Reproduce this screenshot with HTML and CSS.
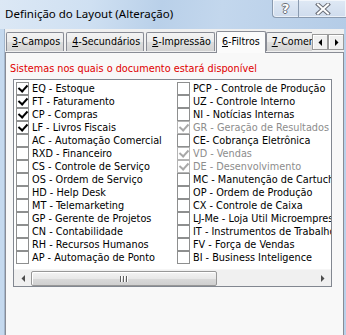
FILE: index.html
```html
<!DOCTYPE html>
<html>
<head>
<meta charset="utf-8">
<link rel="stylesheet" href="styles.css">
</head>
<body>
<div class="window">
  <div class="titlebar">
    <span class="title">Definição do Layout (Alteração)</span>
    <div class="capbtns">
      <div class="capbtn help"><span>?</span></div>
      <div class="capbtn close">
        <svg width="16" height="12" viewBox="0 0 16 12">
          <path d="M3 1.5 L13 10.5 M13 1.5 L3 10.5" stroke="#6b6f78" stroke-width="4" stroke-linecap="square" fill="none"/>
          <path d="M3 1.5 L13 10.5 M13 1.5 L3 10.5" stroke="#ffffff" stroke-width="2" stroke-linecap="square" fill="none"/>
        </svg>
      </div>
    </div>
  </div>
  <div class="client">
    <div class="tabrow">
      <div class="tab"><u>3</u>-Campos</div>
      <div class="tab"><u>4</u>-Secundários</div>
      <div class="tab"><u>5</u>-Impressão</div>
      <div class="tab sel"><u>6</u>-Filtros</div>
      <div class="tab last"><u>7</u>-Comentários</div>
      <div class="arrows">
        <div class="arr"><svg width="5" height="7" viewBox="0 0 5 7"><path d="M4 0 L4 7 L0.5 3.5 Z" fill="#000"/></svg></div>
        <div class="arr"><svg width="5" height="7" viewBox="0 0 5 7"><path d="M1 0 L1 7 L4.5 3.5 Z" fill="#000"/></svg></div>
      </div>
    </div>
    <div class="panel">
      <div class="label">Sistemas nos quais o documento estará disponível</div>
      <div class="listbox">
        <div class="cols">
          <div class="col">
            <div class="item"><span class="cb on"></span>EQ - Estoque</div>
            <div class="item"><span class="cb on"></span>FT - Faturamento</div>
            <div class="item"><span class="cb on"></span>CP - Compras</div>
            <div class="item"><span class="cb on"></span>LF - Livros Fiscais</div>
            <div class="item"><span class="cb"></span>AC - Automação Comercial</div>
            <div class="item"><span class="cb"></span>RXD - Financeiro</div>
            <div class="item"><span class="cb"></span>CS - Controle de Serviço</div>
            <div class="item"><span class="cb"></span>OS - Ordem de Serviço</div>
            <div class="item"><span class="cb"></span>HD - Help Desk</div>
            <div class="item"><span class="cb"></span>MT - Telemarketing</div>
            <div class="item"><span class="cb"></span>GP - Gerente de Projetos</div>
            <div class="item"><span class="cb"></span>CN - Contabilidade</div>
            <div class="item"><span class="cb"></span>RH - Recursos Humanos</div>
            <div class="item"><span class="cb"></span>AP - Automação de Ponto</div>
          </div>
          <div class="col">
            <div class="item"><span class="cb"></span>PCP - Controle de Produção</div>
            <div class="item"><span class="cb"></span>UZ - Controle Interno</div>
            <div class="item"><span class="cb"></span>NI - Notícias Internas</div>
            <div class="item dis"><span class="cb on"></span>GR - Geração de Resultados</div>
            <div class="item"><span class="cb"></span>CE- Cobrança Eletrônica</div>
            <div class="item dis"><span class="cb on"></span>VD - Vendas</div>
            <div class="item dis"><span class="cb on"></span>DE - Desenvolvimento</div>
            <div class="item"><span class="cb"></span>MC - Manutenção de Cartuchos</div>
            <div class="item"><span class="cb"></span>OP - Ordem de Produção</div>
            <div class="item"><span class="cb"></span>CX - Controle de Caixa</div>
            <div class="item"><span class="cb"></span>LJ-Me - Loja Util Microempresa</div>
            <div class="item"><span class="cb"></span>IT - Instrumentos de Trabalho</div>
            <div class="item"><span class="cb"></span>FV - Força de Vendas</div>
            <div class="item"><span class="cb"></span>BI - Business Inteligence</div>
          </div>
        </div>
        <div class="hscroll">
          <div class="sbtn"><svg width="4" height="7" viewBox="0 0 4 7"><path d="M4 0 L4 7 L0.5 3.5 Z" fill="#4d4d4d"/></svg></div>
          <div class="track">
            <div class="thumb"><span class="grip"></span><span class="grip"></span><span class="grip"></span></div>
          </div>
          <div class="sbtn"><svg width="4" height="7" viewBox="0 0 4 7"><path d="M0 0 L0 7 L3.5 3.5 Z" fill="#4d4d4d"/></svg></div>
        </div>
      </div>
    </div>
  </div>
</div>
</body>
</html>
```

FILE: styles.css
```css
* { box-sizing: border-box; }
html, body { margin: 0; padding: 0; }
body {
  width: 346px;
  height: 335px;
  overflow: hidden;
  background: #f0f0f0;
  font-family: "DejaVu Sans Condensed", "DejaVu Sans", sans-serif;
  font-stretch: condensed;
}
.window {
  width: 346px;
  height: 335px;
  display: flex;
  flex-direction: column;
  background: linear-gradient(90deg, #c5d9ee 0px, #b9d1ea 100%);
}
.titlebar {
  height: 29px;
  flex: none;
  position: relative;
  background: linear-gradient(100deg, #dce8f5 0px, #cfe0f2 90px, #b9d0e9 160px, #c3d7ed 220px, #b4cce7 346px);
  display: flex;
  align-items: flex-start;
}
.title {
  font-family: "Noto Sans", "Open Sans", sans-serif;
  font-stretch: normal;
  font-size: 11.5px;
  color: #000;
  padding: 6px 0 0 5px;
}
.capbtns {
  position: absolute;
  top: 0;
  right: 0;
  display: flex;
  height: 18px;
  border: 1px solid #8a9bb0;
  border-top: none;
  border-right: none;
  border-radius: 0 0 0 4px;
  background: linear-gradient(#dfe9f5, #cfdced);
  box-shadow: inset 0 0 0 1px rgba(255,255,255,0.6);
}
.capbtn {
  display: flex;
  align-items: center;
  justify-content: center;
}
.capbtn.help {
  width: 26px;
  border-right: 1px solid #8a9bb0;
  font-family: "DejaVu Sans", sans-serif;
  font-stretch: normal;
  font-weight: bold;
  font-size: 13px;
  color: #fff;
  text-shadow: -1px 0 #6b6f78, 1px 0 #6b6f78, 0 -1px #6b6f78, 0 1px #6b6f78;
}
.capbtn.close { width: 47px; }
.client {
  flex: 1;
  margin: 0 2px 0 4px;
  background: #f0f0f0;
  border-left: 1px solid #a3b6cc;
  padding: 1px 0 0 0;
  display: flex;
  flex-direction: column;
}
.tabrow {
  display: flex;
  align-items: flex-end;
  height: 22px;
  padding-left: 1px;
  position: relative;
  z-index: 1;
}
.tab {
  flex: none;
  height: 19px;
  border: 1px solid #898c95;
  border-bottom: none;
  border-radius: 2px 2px 0 0;
  background: linear-gradient(#f3f3f3, #ebebeb 50%, #dedede 51%, #d3d3d3);
  font-size: 10.6px;
  line-height: 17px;
  padding: 0 3px 0 5px;
  margin-right: 2px;
  margin-bottom: 1px;
  white-space: nowrap;
  color: #000;
}
.tab.sel {
  height: 22px;
  margin: 0 -1px -1px -1px;
  padding: 0 5px 0 5px;
  background: #fbfbfb;
  line-height: 19px;
}
.tab.last {
  flex: 1 1 auto;
  min-width: 0;
  overflow: hidden;
  border-right: none;
  border-radius: 2px 0 0 0;
  padding-left: 5px;
  margin: 0 0 1px 1px;
}
.arrows {
  flex: none;
  display: flex;
  margin-bottom: 2px;
}
.arr {
  width: 16px;
  height: 16px;
  border: 1px solid #9a9a9a;
  background: #f0f0f0;
  display: flex;
  align-items: center;
  justify-content: center;
  box-shadow: inset 1px 1px #ffffff;
}
.panel {
  flex: 1;
  border: 1px solid #898c95;
  border-bottom: none;
  background: #f8f8f8;
  padding: 9px 0 0 4px;
}
.label {
  color: #e00000;
  font-size: 10.8px;
  height: 14px;
  line-height: 14px;
  margin-bottom: 3px;
}
.listbox {
  margin-left: 3px;
  width: 319px;
  height: 208px;
  border: 1px solid #828790;
  background: #fff;
  display: flex;
  flex-direction: column;
  overflow: hidden;
}
.cols {
  flex: 1;
  display: flex;
  padding: 2px 0 0 0;
  overflow: hidden;
}
.col {
  width: 161px;
  flex: none;
  overflow: hidden;
}
.item {
  height: 13px;
  display: flex;
  align-items: center;
  white-space: nowrap;
  font-size: 10.8px;
  line-height: 13px;
  color: #000;
  padding-left: 2px;
}
.item.dis { color: #8d8d8d; }
.cb {
  width: 13px;
  height: 13px;
  flex: none;
  border: 1px solid #8e8f8f;
  background: #fff;
  margin-right: 3px;
  position: relative;
}
.cb.on::after {
  content: "";
  position: absolute;
  left: 3px;
  top: 0px;
  width: 4px;
  height: 7px;
  border: solid #000;
  border-width: 0 2.5px 2.5px 0;
  transform: rotate(42deg);
}
.item.dis .cb { border-color: #b4b4b4; }
.item.dis .cb.on::after { border-color: #a8a8a8; }
.hscroll {
  height: 17px;
  flex: none;
  display: flex;
  background: #f0f0f0;
  border-top: 1px solid #f6f6f6;
}
.sbtn {
  width: 17px;
  display: flex;
  align-items: center;
  justify-content: center;
}
.track {
  flex: 1;
  padding: 1px 0;
  display: flex;
}
.thumb {
  width: 186px;
  height: 15px;
  border: 1px solid #979797;
  border-radius: 2px;
  background: linear-gradient(#f3f3f3, #e8e8e8 50%, #d9d9d9 51%, #d0d0d0);
  display: flex;
  align-items: center;
  justify-content: center;
  gap: 1px;
  box-shadow: inset 1px 1px #fff;
}
.grip {
  width: 1px;
  height: 6px;
  background: #5f5f5f;
  border-right: 1px solid #fff;
  box-sizing: content-box;
}
```
